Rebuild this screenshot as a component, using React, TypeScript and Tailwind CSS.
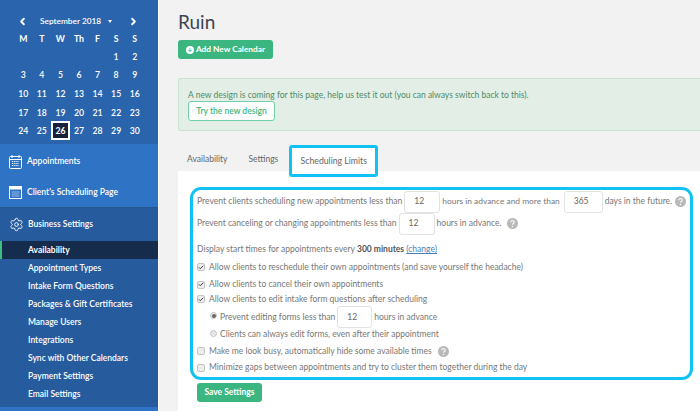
import React from 'react';
import { ChevronLeft, ChevronRight, Settings, Check } from 'lucide-react';

const days = [
  ['', '', '', '', '', '1', '2'],
  ['3', '4', '5', '6', '7', '8', '9'],
  ['10', '11', '12', '13', '14', '15', '16'],
  ['17', '18', '19', '20', '21', '22', '23'],
  ['24', '25', '26', '27', '28', '29', '30'],
];

const settingsLinks = [
  'Appointment Types',
  'Intake Form Questions',
  'Packages & Gift Certificates',
  'Manage Users',
  'Integrations',
  'Sync with Other Calendars',
  'Payment Settings',
  'Email Settings',
];

const NumberBox = ({ value, w }: { value: string; w: string }) => (
  <span className={`mx-[2px] flex h-[22px] shrink-0 items-center rounded-[3px] border border-[#e2e2e2] bg-white pl-[9px] text-[#666] ${w}`}>
    {value}
  </span>
);

const Help = () => (
  <svg width="11" height="11" viewBox="0 0 11 11" className="block">
    <circle cx="5.5" cy="5.5" r="5.5" fill="#b8b8b8" />
    <path d="M3.8 4.2c0-2 3.4-2 3.4 0 0 1.3-1.7 1.2-1.7 2.5" fill="none" stroke="#f4f4f4" strokeWidth="1.3" />
    <circle cx="5.5" cy="8.5" r="0.8" fill="#f4f4f4" />
  </svg>
);

const CheckBox = ({ on }: { on?: boolean }) => (
  <span className="mr-[4px] flex h-[8px] w-[8px] shrink-0 items-center justify-center rounded-[2px] border border-[#c4c4c4] bg-[#ececec]">
    {on && <Check size={7} strokeWidth={4} className="text-[#444]" />}
  </span>
);

const Radio = ({ on }: { on?: boolean }) => (
  <span className="mr-[3px] mb-[3px] flex h-[7px] w-[7px] shrink-0 items-center justify-center rounded-full border border-[#c4c4c4] bg-[#e8e8e8]">
    {on && <span className="h-[4px] w-[4px] rounded-full bg-[#666]" />}
  </span>
);

export default function App() {
  return (
    <div className="flex h-[411px] w-[700px] overflow-hidden whitespace-nowrap bg-[#f2f2f2] font-['Lato','Liberation_Sans',sans-serif] text-[8.5px]">
      <aside className="flex w-[159px] shrink-0 flex-col border-r border-[#fafafa] text-white">
        <div className="h-[144px] shrink-0 bg-[#2a64ad] px-[14px] pt-[14px] font-semibold">
          <div className="flex h-[14px] items-center pl-[3px] text-[8.3px]">
            <ChevronLeft size={11} strokeWidth={4} />
            <span className="ml-[12px] flex w-[88px] items-center gap-[7px]">
              September 2018
              <span className="mt-[1px] border-x-[2.5px] border-t-[3px] border-x-transparent border-t-white" />
            </span>
            <ChevronRight size={11} strokeWidth={4} />
          </div>
          <div className="grid grid-cols-7 justify-items-center pt-[2px] text-[8.7px] font-bold leading-[17px]">
            {['M', 'T', 'W', 'Th', 'F', 'S', 'S'].map((d, i) => (
              <span key={i}>{d}</span>
            ))}
          </div>
          <div className="grid grid-cols-7 justify-items-center">
            {days.flat().map((d, i) => (
              <span key={i} className="flex h-[18.6px] w-[18.6px] items-center justify-center text-[8.7px]">
                {d === '26' ? (
                  <span className="flex h-[19px] w-[19px] items-center justify-center border-2 border-white bg-[#17233a] font-bold">26</span>
                ) : (
                  d
                )}
              </span>
            ))}
          </div>
        </div>

        <div className="h-[63px] shrink-0 bg-[#2f73c4] text-[8.5px] font-semibold">
          <div className="flex h-[32px] items-center gap-[5px] pl-[9px] pt-[3px]">
            <svg width="13" height="14" viewBox="0 0 13 14" fill="none" stroke="white" strokeWidth="1">
              <rect x="0.5" y="1.5" width="12" height="12" rx="1" />
              <path d="M3 0v3M10 0v3M0.5 4.5h12" />
              <path d="M3 6.5h7M3 8.5h7M3 10.5h7" strokeDasharray="1.2 1" />
            </svg>
            Appointments
          </div>
          <div className="flex h-[31px] items-center gap-[5px] pl-[9px] pt-[1px]">
            <svg width="13" height="13" viewBox="0 0 13 13">
              <rect x="0.5" y="0.5" width="12" height="12" fill="none" stroke="white" />
              <rect x="1" y="1" width="11" height="2.5" fill="white" />
              <rect x="2.5" y="5" width="8" height="6" fill="white" fillOpacity="0.25" />
            </svg>
            Client's Scheduling Page
          </div>
        </div>

        <div className="h-[200px] shrink-0 border-t border-[#25558f] bg-[#265c9e] text-[8.5px] font-semibold">
          <div className="flex h-[33px] items-center gap-[4px] pl-[9px]">
            <Settings size={15} strokeWidth={1.4} />
            Business Settings
          </div>
          <div className="flex h-[18px] items-center border-l-2 border-[#3ebd85] bg-[#152c4d] pl-[26px] font-bold">Availability</div>
          {settingsLinks.map((link) => (
            <div key={link} className="flex h-[18px] items-center pl-[28px]">
              {link}
            </div>
          ))}
        </div>
        <div className="flex-1 bg-[#2f73c4]" />
      </aside>

      <main className="flex min-w-0 flex-1 flex-col pl-[19px] pt-[9px] text-[#777]">
        <h1 className="text-[19px] leading-[26px] text-[#3d4552]">Ruin</h1>
        <button className="mt-[5px] flex h-[19px] w-[95px] items-center justify-center gap-[2px] rounded-[3px] bg-[#3cb680] text-[8.3px] font-bold text-white">
          <span className="flex h-[8px] w-[8px] items-center justify-center rounded-full bg-white text-[8px] font-bold leading-none text-[#3cb680]">+</span>
          Add New Calendar
        </button>

        <div className="mt-[19px] h-[53px] rounded-l-[3px] border border-r-0 border-[#c9e2d2] bg-[#e3efe6] pl-[9px] pt-[10px] text-[#4f8a68]">
          <p className="text-[8.5px] leading-[12px]">A new design is coming for this page, help us test it out (you can always switch back to this).</p>
          <button className="flex h-[20px] w-[87px] items-center justify-center rounded-[3px] border border-[#6fd0aa] bg-white text-[8.5px] font-semibold text-[#3cb680]">
            Try the new design
          </button>
        </div>

        <div className="mt-[14px] flex h-[31px] items-start text-[8.5px] text-[#666]">
          <span className="pl-[9px] pt-[8px]">Availability</span>
          <span className="pl-[21px] pt-[8px]">Settings</span>
          <span className="relative z-10 ml-[11px] flex h-[32px] w-[89px] justify-center rounded-[3px] border-[3px] border-[#12c2f5] bg-white pt-[6px] text-[8.7px]">Scheduling Limits</span>
        </div>

        <div className="-mt-[5px] flex-1 bg-white pl-[12px] pt-[16px]">
          <div className="h-[193px] w-[503px] rounded-[11px] border-[3px] border-[#12c2f5] px-[4px]">
            <div className="flex h-[23px] items-center">
              <span className="text-[8.6px]">Prevent clients scheduling new appointments less than</span>
              <NumberBox value="12" w="w-[36px]" />
              <span className="text-[8.4px]">hours in advance and more than</span>
              <span className="ml-[2px]"><NumberBox value="365" w="w-[39px]" /></span>
              days in the future.
              <span className="ml-auto"><Help /></span>
            </div>
            <div className="flex h-[21px] items-center">
              Prevent canceling or changing appointments less than
              <NumberBox value="12" w="w-[36px]" />
              hours in advance.
              <span className="ml-[6px]"><Help /></span>
            </div>
            <div className="mt-[8px] flex h-[15px] items-center">
              Display start times for appointments every&nbsp;<b className="text-[#555]">300 minutes</b>&nbsp;
              <span className="text-[#4a7fb5] underline">(change)</span>
            </div>
            <div className="flex h-[17px] items-center pt-[3px]"><CheckBox on />Allow clients to reschedule their own appointments (and save yourself the headache)</div>
            <div className="flex h-[17px] items-center pt-[4px]"><CheckBox on />Allow clients to cancel their own appointments</div>
            <div className="flex h-[16px] items-center"><CheckBox on />Allow clients to edit intake form questions after scheduling</div>
            <div className="flex h-[20px] items-center pl-[13px]">
              <Radio on />Prevent editing forms less than
              <NumberBox value="12" w="w-[35px]" />
              hours in advance
            </div>
            <div className="flex h-[15px] items-center pl-[13px]"><Radio />Clients can always edit forms, even after their appointment</div>
            <div className="flex h-[18px] items-center">
              <CheckBox />Make me look busy, automatically hide some available times
              <span className="ml-[6px]"><Help /></span>
            </div>
            <div className="flex h-[15px] items-center"><CheckBox />Minimize gaps between appointments and try to cluster them together during the day</div>
          </div>
          <button className="ml-[7px] mt-[3px] h-[19px] w-[65px] rounded-[3px] bg-[#3cb680] text-[8.5px] font-bold text-white">Save Settings</button>
        </div>
      </main>
    </div>
  );
}
